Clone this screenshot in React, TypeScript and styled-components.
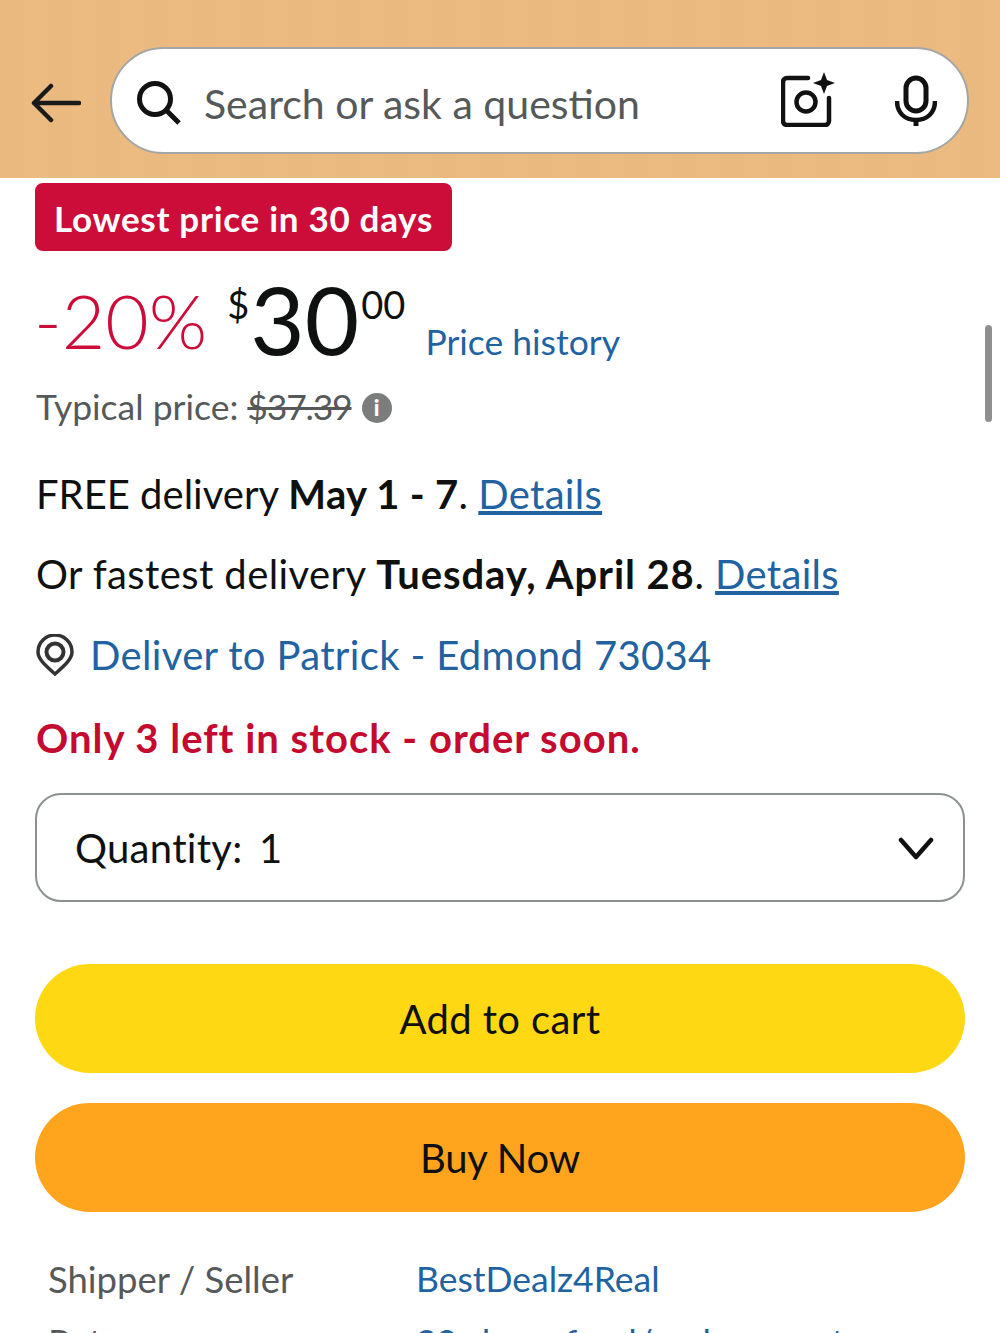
import { createGlobalStyle, styled } from 'styled-components';

const GlobalStyle = createGlobalStyle`
  html, body {
    margin: 0;
    padding: 0;
    background: #fff;
  }
  * {
    box-sizing: border-box;
  }
  body {
    font-family: Lato, "Liberation Sans", sans-serif;
  }
`;

const Page = styled.div`
  position: relative;
  width: 1000px;
  height: 1333px;
  overflow: hidden;
  background: #fff;
  color: #0f1111;
`;

const Header = styled.header`
  height: 178px;
  padding: 47px 31px 24px 31px;
  display: flex;
  align-items: center;
  gap: 29px;
  background: repeating-linear-gradient(90deg, #eab97f 0 24px, #ecbb81 24px 48px);
  svg {
    flex: none;
  }
`;

const BackSlot = styled.span`
  display: flex;
  margin-top: 4px;
`;

const SearchBox = styled.div`
  flex: 1;
  height: 107px;
  display: flex;
  align-items: center;
  padding: 0 30px 0 25px;
  background: #fff;
  border: 2px solid #a2a6a6;
  border-radius: 54px;
`;

const Placeholder = styled.span`
  flex: 1;
  margin: 6px 0 0 23px;
  font-size: 41px;
  color: #565959;
`;

const IconSlot = styled.span<{ $gap: number; $lift: number }>`
  display: flex;
  margin-left: ${(p) => p.$gap}px;
  margin-top: ${(p) => p.$lift}px;
`;

const Content = styled.main`
  padding: 5px 35px 0;
`;

const Badge = styled.div`
  width: 417px;
  height: 68px;
  padding-top: 2px;
  display: flex;
  align-items: center;
  justify-content: center;
  background: #cc0c39;
  border-radius: 8px;
  color: #fff;
  font-size: 35px;
  font-weight: 700;
  letter-spacing: 0.7px;
  white-space: nowrap;
`;

const PriceRow = styled.div`
  height: 130px;
  display: flex;
  align-items: flex-start;
  line-height: 1;
  white-space: nowrap;
`;

const Discount = styled.span`
  font-size: 75px;
  font-weight: 300;
  color: #cc0c39;
  margin: 32px 0 0 -1px;
`;

const PriceTag = styled.span`
  margin: 21px 0 0 20px;
`;

const Symbol = styled.sup`
  font-size: 38px;
  line-height: 0;
  vertical-align: 36px;
`;

const Whole = styled.span`
  font-size: 94px;
  margin: 0 2px 0 1px;
`;

const Fraction = styled.sup`
  font-size: 38px;
  line-height: 0;
  vertical-align: 36px;
`;

const HistoryLink = styled.a`
  font-size: 35.5px;
  color: #2162a1;
  margin: 73px 0 0 20px;
`;

const Typical = styled.div`
  height: 50px;
  display: flex;
  align-items: center;
  gap: 10px;
  padding-left: 1px;
  font-size: 35.5px;
  color: #565959;
`;

const Struck = styled.s`
  letter-spacing: -1.2px;
`;

const InfoDot = styled.span`
  width: 30px;
  height: 30px;
  margin-top: 3px;
  border-radius: 50%;
  display: flex;
  align-items: center;
  justify-content: center;
  background: #7b7d7d;
  color: #fff;
  font-size: 22px;
  font-weight: 900;
`;

const Line = styled.div<{ $top: number; $spacing?: number; $boldSpacing?: number }>`
  margin-top: ${(p) => p.$top}px;
  height: 50px;
  padding-left: 1px;
  display: flex;
  align-items: center;
  font-size: 40px;
  letter-spacing: ${(p) => p.$spacing ?? 0.35}px;
  white-space: pre;
  b {
    letter-spacing: ${(p) => p.$boldSpacing ?? 0.9}px;
  }
`;

const TextLink = styled.a`
  color: #2162a1;
  text-decoration: underline;
  letter-spacing: 0.3px;
`;

const DeliverTo = styled.span`
  color: #2162a1;
  margin-left: 16px;
`;

const Stock = styled.div`
  margin-top: 33px;
  height: 50px;
  padding-left: 1px;
  display: flex;
  align-items: center;
  font-size: 40px;
  font-weight: 700;
  letter-spacing: 1px;
  color: #c40b2f;
`;

const QuantitySelect = styled.div`
  margin-top: 30px;
  height: 109px;
  display: flex;
  align-items: center;
  justify-content: space-between;
  padding: 0 29px 0 38px;
  border: 2px solid #8d9090;
  border-radius: 26px;
  font-size: 40px;
  letter-spacing: 0.3px;
  word-spacing: 6px;
`;

const ActionButton = styled.button<{ $bg: string; $top: number; $spacing: number }>`
  display: block;
  width: 100%;
  height: 109px;
  margin-top: ${(p) => p.$top}px;
  border: 0;
  border-radius: 55px;
  background: ${(p) => p.$bg};
  color: #0f1111;
  font: inherit;
  font-size: 40px;
  letter-spacing: ${(p) => p.$spacing}px;
`;

const InfoTable = styled.dl`
  margin: 42px 0 0;
  padding-left: 13px;
  display: grid;
  grid-template-columns: 368px 1fr;
  row-gap: 13px;
  font-size: 35.5px;
  line-height: 50px;
`;

const InfoLabel = styled.dt`
  color: #565959;
  font-size: 36.5px;
`;

const InfoValue = styled.dd`
  margin: 0;
  color: #2162a1;
`;

const Scrollbar = styled.div`
  position: absolute;
  right: 8px;
  top: 325px;
  width: 7px;
  height: 97px;
  border-radius: 4px;
  background: #8f8f8f;
`;

function BackIcon() {
  return (
    <svg width="50" height="40" viewBox="0 0 50 40" fill="none" stroke="#1a1a1a" strokeWidth="4.5" strokeLinecap="round" strokeLinejoin="round">
      <path d="M48 20H3M20 3L3 20l17 17" />
    </svg>
  );
}

function SearchIcon() {
  return (
    <svg width="44" height="44" viewBox="0 0 44 44" fill="none" stroke="#111" strokeWidth="5">
      <circle cx="18" cy="18" r="15.5" />
      <path d="M29 29l13 13" />
    </svg>
  );
}

function CameraIcon() {
  return (
    <svg width="54" height="56" viewBox="0 0 54 56" fill="none" stroke="#111" strokeWidth="4.5">
      <path d="M27 7H6a4 4 0 0 0-4 4v39a4 4 0 0 0 4 4h38a4 4 0 0 0 4-4V27" strokeLinecap="round" />
      <circle cx="25" cy="31" r="9.5" />
      <path d="M43 1l3 8 8 3-8 3-3 8-3-8-8-3 8-3z" fill="#111" stroke="none" />
    </svg>
  );
}

function MicIcon() {
  return (
    <svg width="42" height="52" viewBox="0 0 42 52" fill="none" stroke="#111" strokeWidth="5">
      <rect x="11" y="3" width="20" height="33" rx="10" />
      <path d="M2 26c0 12 8 19 19 19s19-7 19-19" strokeWidth="4.5" />
      <path d="M21 44v7" strokeWidth="5" />
    </svg>
  );
}

function PinIcon() {
  return (
    <svg width="38" height="42" viewBox="0 0 38 42" fill="none" stroke="#333" strokeWidth="3.5">
      <path d="M19 40C9 31 2 25 2 18a17 17 0 0 1 34 0c0 7-7 13-17 22z" />
      <circle cx="19" cy="18" r="8.5" strokeWidth="4" />
    </svg>
  );
}

function ChevronIcon() {
  return (
    <svg width="36" height="26" viewBox="0 0 36 26" fill="none" stroke="#111" strokeWidth="4.5" strokeLinecap="round" strokeLinejoin="round">
      <path d="M3 5l15 17L33 5" />
    </svg>
  );
}

export default function App() {
  return (
    <Page>
      <GlobalStyle />
      <Header>
        <BackSlot>
          <BackIcon />
        </BackSlot>
        <SearchBox>
          <IconSlot $gap={0} $lift={4}>
            <SearchIcon />
          </IconSlot>
          <Placeholder>Search or ask a question</Placeholder>
          <IconSlot $gap={0} $lift={-3}>
            <CameraIcon />
          </IconSlot>
          <IconSlot $gap={60} $lift={0}>
            <MicIcon />
          </IconSlot>
        </SearchBox>
      </Header>
      <Content>
        <Badge>Lowest price in 30 days</Badge>
        <PriceRow>
          <Discount>-20%</Discount>
          <PriceTag>
            <Symbol>$</Symbol>
            <Whole>30</Whole>
            <Fraction>00</Fraction>
          </PriceTag>
          <HistoryLink>Price history</HistoryLink>
        </PriceRow>
        <Typical>
          <span>
            Typical price: <Struck>$37.39</Struck>
          </span>
          <InfoDot>i</InfoDot>
        </Typical>
        <Line $top={38} $spacing={0} $boldSpacing={0.3}>
          <span>
            FREE delivery <b>May 1 - 7</b>. <TextLink>Details</TextLink>
          </span>
        </Line>
        <Line $top={30} $spacing={0.4} $boldSpacing={0.9}>
          <span>
            Or fastest delivery <b>Tuesday, April 28</b>. <TextLink>Details</TextLink>
          </span>
        </Line>
        <Line $top={31}>
          <PinIcon />
          <DeliverTo>Deliver to Patrick - Edmond 73034</DeliverTo>
        </Line>
        <Stock>Only 3 left in stock - order soon.</Stock>
        <QuantitySelect>
          <span>Quantity: 1</span>
          <ChevronIcon />
        </QuantitySelect>
        <ActionButton $bg="#ffd814" $top={62} $spacing={0.4}>
          Add to cart
        </ActionButton>
        <ActionButton $bg="#ffa41c" $top={30} $spacing={-0.2}>
          Buy Now
        </ActionButton>
        <InfoTable>
          <InfoLabel>Shipper / Seller</InfoLabel>
          <InfoValue>BestDealz4Real</InfoValue>
          <InfoLabel>Returns</InfoLabel>
          <InfoValue>30-day refund/replacement</InfoValue>
        </InfoTable>
      </Content>
      <Scrollbar />
    </Page>
  );
}
